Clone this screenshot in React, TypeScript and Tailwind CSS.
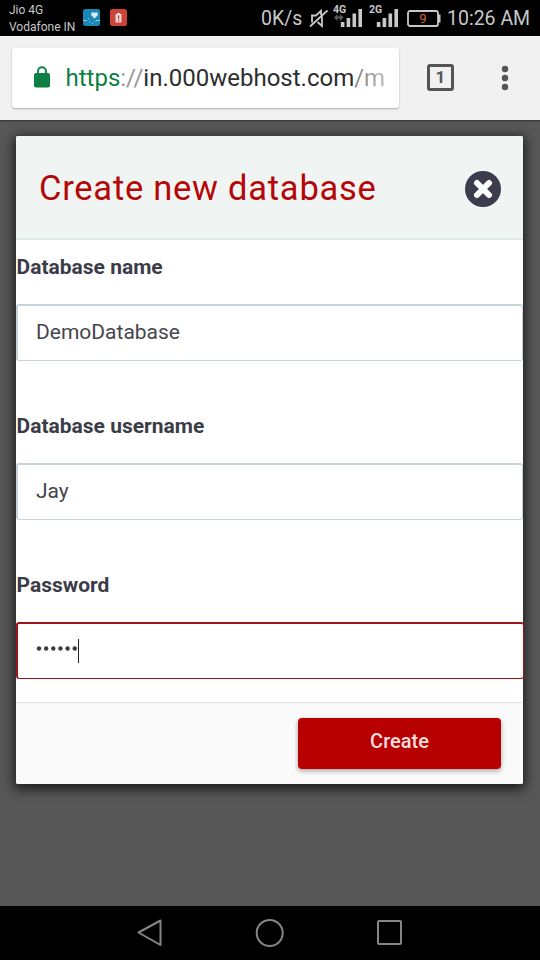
import { ReactNode } from 'react'

const MutedIcon = () => (
  <svg className="h-5 w-5 shrink-0" viewBox="0 0 20 20" fill="none" stroke="#c8c8c8" strokeWidth="1.800">
    <path d="M13 7V2.800L8 7.500H4v7M14 8.500v9.500l-4.500-4M2 18.500L19.500 2.500" />
  </svg>
)

const Signal = ({ label, arrows }: { label: string; arrows?: boolean }) => (
  <svg className="h-7 w-[30px] shrink-0" viewBox="0 0 30 28" fill="#c8c8c8">
    <text x="0" y="10" className="font-['Roboto'] text-[10.5px] font-bold">
      {label}
    </text>
    {arrows && <path fill="#5c5c5c" d="M1 14.500l3.500-3.500v7zM10.500 14.500L7 11v7zM4 13.500h3v2H4z" />}
    <path d="M7.800 19h3.600v5H7.800zM13.600 15h3.600v9h-3.600zM19.500 10.500h3.600V24h-3.600zM25.400 6H29v18h-3.600z" />
  </svg>
)

const StatusBar = () => (
  <div className="flex h-9 shrink-0 bg-black text-[#c8c8c8]">
    <div className="w-[83px] shrink-0 whitespace-nowrap pl-[9px] pt-[2px] text-[12px] leading-[17px]">
      <p>Jio 4G</p>
      <p>Vodafone IN</p>
    </div>
    <svg className="mt-[9px] h-[17px] w-[17px] shrink-0" viewBox="0 0 17 17">
      <rect width="17" height="17" rx="2.500" fill="#1a87b4" />
      <path fill="#dceaf0" d="M11.500 9.500L8.500 6.500C7 4 10 2 11.500 4c1.500-2 4.500 0 3 2.500z" />
      <path stroke="#a8d3e4" strokeWidth=".9" fill="none" d="M0 11.500h4M13 11.500h4M5 9l1.200 1.200M6.500 12.500l1.200 1.200M9 14.500h1M11.500 13l1-1" />
    </svg>
    <svg className="ml-[10px] mt-[9px] h-[17px] w-[17px] shrink-0" viewBox="0 0 17 17">
      <rect width="17" height="17" rx="2.500" fill="#cb4339" />
      <path fill="#e6d4d2" d="M7 4h3v1h1.500v8.500h-6V5H7z" />
      <path fill="#b4453d" d="M8 6.500h1.200v3.500H8zM8 11h1.200v1.200H8z" />
    </svg>
    <div className="ml-[134px] w-[47px] shrink-0 whitespace-nowrap pt-[7px] text-[19.5px] leading-6">0K/s</div>
    <div className="w-[25px] shrink-0 pt-2">
      <MutedIcon />
    </div>
    <div className="w-9 shrink-0 pt-[3px]">
      <Signal label="4G" arrows />
    </div>
    <div className="w-[38px] shrink-0 pt-[3px]">
      <Signal label="2G" />
    </div>
    <svg className="mt-[9px] h-[19px] w-[35px] shrink-0" viewBox="0 0 35 19">
      <rect x="1" y="2" width="30" height="15" rx="2" fill="none" stroke="#c8c8c8" strokeWidth="1.800" />
      <path fill="#c8c8c8" d="M31 5.500h2.500v8H31z" />
      <text x="16" y="14" textAnchor="middle" fill="#d9603c" className="font-['Roboto'] text-[13px]">
        9
      </text>
    </svg>
    <div className="ml-[5px] whitespace-nowrap pt-[7px] text-[19.5px] leading-6">10:26 AM</div>
  </div>
)

const BrowserBar = () => (
  <div className="flex h-[84px] shrink-0 items-start bg-[#f1f1f1] pl-3 pt-3">
    <div className="flex h-[60px] w-[387px] shrink-0 items-center rounded-[3px] bg-white shadow-[0_1px_2px_rgba(0,0,0,0.3)]">
      <svg className="-mt-[2px] ml-[22px] h-[22px] w-4 shrink-0" viewBox="0 0 16 22">
        <rect y="7" width="16" height="14.500" rx="2" fill="#0c8043" />
        <path d="M4 8V5.200a4 4 0 0 1 8 0V8" fill="none" stroke="#0c8043" strokeWidth="1.900" />
      </svg>
      <p className="ml-[15.5px] whitespace-nowrap text-[24px] leading-none text-[#2d2d2d]">
        <span className="text-[#0c8043]">https</span>
        <span className="text-[#979797]">://</span>
        in.000webhost.com
        <span className="bg-gradient-to-r from-[#808080] to-[#b8b8b8] bg-clip-text text-transparent">/m</span>
      </p>
    </div>
    <div className="ml-7 mt-4 flex h-[27px] w-[27px] shrink-0 items-center justify-center rounded-[3px] border-[3px] border-[#555] text-[17px] font-bold leading-none text-[#555]">
      1
    </div>
    <svg className="ml-[47px] mt-[17px] h-[26px] w-2 shrink-0" viewBox="0 0 8 26" fill="#555">
      <circle cx="4" cy="4" r="3.200" />
      <circle cx="4" cy="13" r="3.200" />
      <circle cx="4" cy="22" r="3.200" />
    </svg>
  </div>
)

const Field = ({ label, active, children }: { label: string; active?: boolean; children: ReactNode }) => (
  <div className="h-[159px]">
    <p className="h-16 whitespace-nowrap pl-[0.5px] pt-[14px] text-[21px] font-bold leading-[26px] text-[#3b3c47]">{label}</p>
    <div
      className={
        active
          ? 'flex h-[57px] w-[508px] items-center rounded-[3px] border border-t-2 border-l-2 border-[#a01316] bg-white pl-[18px] pb-[3px]'
          : 'flex h-[57px] items-center rounded-[3px] border border-t-2 border-l-2 border-[#c6d3d8] bg-white pl-[18px] pb-[3px]'
      }
    >
      {children}
    </div>
  </div>
)

const Modal = () => (
  <div className="flex h-[648px] w-[507px] flex-col rounded-[2px] bg-white shadow-[0_3px_12px_2px_rgba(0,0,0,0.7)]">
    <div className="flex h-[104px] shrink-0 items-center justify-between rounded-t-[2px] border-b-2 border-[#e0ebe9] bg-[#f0f5f4] pl-[23px] pr-[22px]">
      <h1 className="mt-[2px] whitespace-nowrap text-[34.5px] leading-none tracking-[0.75px] text-[#b50707]">Create new database</h1>
      <svg className="mt-[3px] h-9 w-9" viewBox="0 0 36 36">
        <circle cx="18" cy="18" r="18" fill="#3b3c4e" />
        <path d="M12 12l12 12M24 12L12 24" stroke="#fff" strokeWidth="6" strokeLinecap="round" />
      </svg>
    </div>
    <div className="h-[462px] shrink-0 text-[21px] leading-[26px] text-[#45464c]">
      <Field label="Database name">DemoDatabase</Field>
      <Field label="Database username">Jay</Field>
      <Field label="Password" active>
        <svg className="mb-[2px] h-[5px] w-[42px]" viewBox="0 0 42 5" fill="#3b3c40">
          {[0, 1, 2, 3, 4, 5].map((i) => (
            <circle key={i} cx={3 + i * 7.15} cy="2.5" r="2.200" />
          ))}
        </svg>
        <span className="mt-[2px] h-6 w-px bg-[#222]" />
      </Field>
    </div>
    <div className="flex h-[82px] shrink-0 justify-end rounded-b-[2px] border-t border-[#dbe7e5] bg-[#fafafa] pr-[22px] pt-[15px]">
      <button className="h-[51px] w-[203px] rounded-[4px] bg-[#b70000] pb-[6px] text-[20px] font-medium text-[#fbdede] shadow-[0_2px_5px_rgba(0,0,0,0.35)]">
        Create
      </button>
    </div>
  </div>
)

const NavBar = () => (
  <div className="flex h-[54px] shrink-0 bg-black">
    <svg className="h-[54px] w-[540px]" viewBox="0 0 540 54" fill="none" stroke="#858585" strokeWidth="2" strokeLinejoin="round">
      <path d="M138.500 26.500L160.500 14.500v24.500z" />
      <circle cx="269.700" cy="27" r="13" />
      <rect x="378" y="15" width="23" height="23" rx="1" />
    </svg>
  </div>
)

const App = () => {
  return (
    <div className="flex h-[960px] w-[540px] flex-col overflow-hidden bg-[#575757] font-['Roboto',sans-serif]">
      <StatusBar />
      <BrowserBar />
      <div className="h-[786px] shrink-0 bg-[#575757] pl-4 pt-4 shadow-[inset_0_3px_2px_-2px_rgba(0,0,0,0.4)]">
        <Modal />
      </div>
      <NavBar />
    </div>
  )
}

export default App
